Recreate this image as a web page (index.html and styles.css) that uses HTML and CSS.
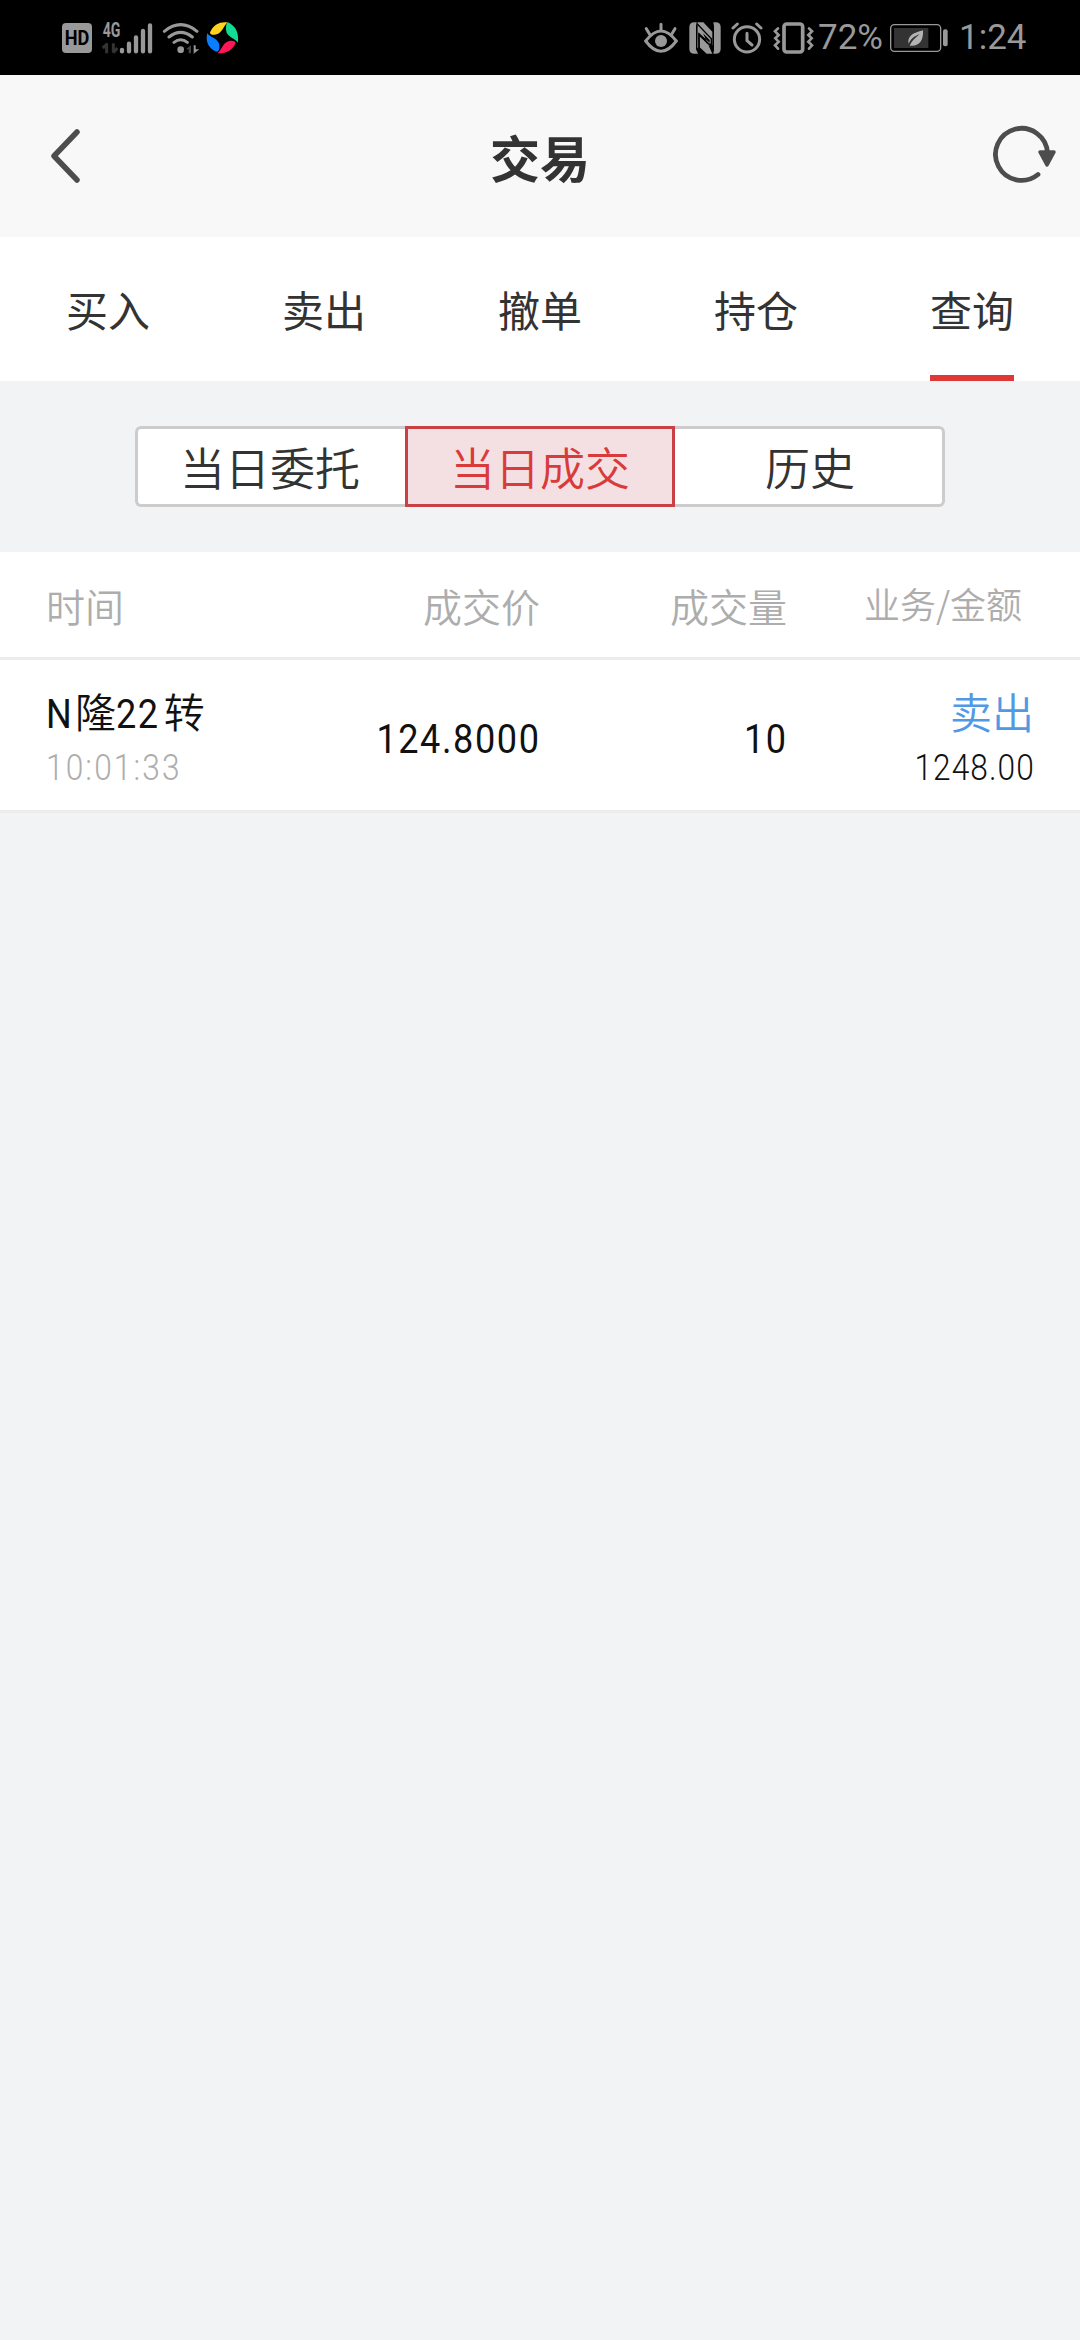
FILE: index.html
```
<!DOCTYPE html>
<html lang="zh-CN">
<head>
	<meta charset="UTF-8">
	<title>交易</title>
	<link rel="stylesheet" href="styles.css">
</head>
<body>
<div class="status">
	<div class="status-left">
		<svg class="icon-hd" viewBox="0 0 90 90">
			<rect width="90" height="90" rx="12" fill="#999"/>
			<text x="45" y="66" text-anchor="middle" textLength="74" lengthAdjust="spacingAndGlyphs" class="hd-text">HD</text>
		</svg>
		<svg class="icon-signal" viewBox="0 0 153 96">
			<text x="2" y="44" textLength="53" lengthAdjust="spacingAndGlyphs" class="g-text">4G</text>
			<path d="M14 64v30M2 78l14-12M34 64v28M46 78L34 92" stroke="#333" stroke-width="9"/>
			<g stroke="#999" stroke-width="13" stroke-linecap="round">
				<path d="M60 84v4M81 65v23M102 46v42M123 27v61M144 10v78"/>
			</g>
		</svg>
		<svg class="icon-wifi" viewBox="0 0 114 96">
			<g fill="none" stroke="#999" stroke-width="9" stroke-linecap="round">
				<path d="M7 28Q56-12 105 28M21 45Q56 17 91 45M36 61Q56 46 76 61"/>
			</g>
			<circle cx="56" cy="83" r="10" fill="#999"/>
			<path d="M72 82l15-12v24h-7v-12z" fill="#444"/>
			<path d="M95 70h6v12h11l-17 13z" fill="#999"/>
		</svg>
		<svg class="icon-ball" viewBox="0 0 100 100">
			<path d="M12 35C22 10 42 1 66 4C54 12 50 38 30 41C20 43 13 42 12 35z" fill="#ffd21c"/>
			<path d="M66 4C90 14 101 38 96 66C91 54 62 48 61 29C60 16 61 9 66 4z" fill="#12db94"/>
			<path d="M90 66C82 88 60 101 34 97C46 92 50 66 68 61C79 58 87 60 90 66z" fill="#ff1659"/>
			<path d="M34 93C9 86-3 62 4 36C9 48 36 52 40 70C42 83 40 89 34 93z" fill="#0b7dff"/>
		</svg>
	</div>
	<div class="status-right">
		<svg class="icon-eye" viewBox="0 0 102 96">
			<path d="M5 57Q28 27 51 27T97 57Q74 88 51 88T5 57z" fill="none" stroke="#999" stroke-width="9"/>
			<circle cx="51" cy="57" r="18" fill="#999"/>
			<path d="M51 7v18M7 20l10 17M93 20L83 37" stroke="#999" stroke-width="9" stroke-linecap="round"/>
		</svg>
		<svg class="icon-nfc" viewBox="0 0 96 96">
			<path d="M16 1H23L21 12V82L27 95H16Q1 95 1 80V16Q1 1 16 1zM80 1H73L75 12V84L73 95H80Q95 95 95 80V16Q95 1 80 1z" fill="#999"/>
			<path d="M26 1h17l27 28v41L28 31v51l-3-6zM70 95H53L32 76V42l30 31V54L42 34" fill="#999"/>
			<path d="M25 6l42 44v23L30 38v44" fill="none" stroke="#000" stroke-width="4"/>
		</svg>
		<svg class="icon-alarm" viewBox="0 0 96 96">
			<g fill="none" stroke="#999" stroke-width="9" stroke-linecap="round">
				<circle cx="48" cy="52" r="38"/>
				<path d="M6 18L19 6M77 6l13 12"/>
				<path d="M48 34v22l15 13"/>
			</g>
		</svg>
		<svg class="icon-vibrate" viewBox="0 0 123 96">
			<g fill="none" stroke="#999" stroke-width="9" stroke-linecap="round">
				<rect x="33" y="6" width="56" height="84" rx="8" stroke-width="11"/>
				<path d="M15 19L6 28l11 11L7 49l10 10L6 70l9 10" stroke-width="8"/>
				<path d="M108 19l9 9-11 11 10 10-10 10 11 11-9 10" stroke-width="8"/>
			</g>
		</svg>
		<span class="percent">72%</span>
		<svg class="icon-battery" viewBox="0 0 174 84">
			<rect x="2" y="2" width="150" height="80" rx="11" fill="none" stroke="#999" stroke-width="4"/>
			<rect x="12" y="12" width="103" height="60" fill="#333"/>
			<rect x="159" y="16" width="14" height="51" rx="6" fill="#999"/>
			<path d="M99 19C78 25 51 32 56 59C66 39 76 36 89 31C76 42 67 49 59 65C88 69 101 49 99 19z" fill="#b3b3b3"/>
		</svg>
		<span class="clock">1:24</span>
	</div>
</div>

<div class="header">
	<svg class="back" viewBox="0 0 30 54">
		<path d="M27 3L4 27l23 24" fill="none" stroke="#4d4d4d" stroke-width="5.5" stroke-linecap="round" stroke-linejoin="round"/>
	</svg>
	<h1 class="title">交易</h1>
	<svg class="refresh" viewBox="0 0 64 58">
		<path d="M45 49.5A26 26 0 1 1 54.5 28" fill="none" stroke="#4d4d4d" stroke-width="4.8" stroke-linecap="round"/>
		<path d="M47 27h14L54 40z" fill="#4d4d4d" stroke="#4d4d4d" stroke-width="3.5" stroke-linejoin="round"/>
	</svg>
</div>

<div class="tabs">
	<div class="tab"><span>买入</span></div>
	<div class="tab"><span>卖出</span></div>
	<div class="tab"><span>撤单</span></div>
	<div class="tab"><span>持仓</span></div>
	<div class="tab active"><span>查询</span></div>
</div>

<div class="segment-wrap">
	<div class="segment">
		<div class="seg">当日委托</div>
		<div class="seg active">当日成交</div>
		<div class="seg">历史</div>
	</div>
</div>

<div class="row thead">
	<div class="col-time">时间</div>
	<div class="col-price">成交价</div>
	<div class="col-count">成交量</div>
	<div class="col-amount">业务/金额</div>
</div>
<div class="row record">
	<div class="col-time">
		<div class="name"><span class="din">N</span>隆<span class="din">22</span>转</div>
		<div class="time"><span class="din">10:01:33</span></div>
	</div>
	<div class="col-price"><span class="din">124.8000</span></div>
	<div class="col-count"><span class="din">10</span></div>
	<div class="col-amount">
		<div class="sell">卖出</div>
		<div class="money"><span class="din">1248.00</span></div>
	</div>
</div>
</body>
</html>
```
FILE: styles.css
```
* {
  box-sizing: border-box;
}
body {
  margin: 0;
  min-height: 2340px;
  background-color: #f2f3f5;
  color: #333;
  font-family: "Noto Sans CJK SC", sans-serif;
}
svg {
  display: block;
  flex: none;
}

/* status bar */
.status {
  display: flex;
  justify-content: space-between;
  height: 75px;
  padding: 0 57px 0 62px;
  background-color: #000;
  color: #999;
  font-family: Roboto, sans-serif;
}
.status-left,
.status-right {
  display: flex;
  align-items: center;
}
.icon-hd {width: 30px;height: 30px;margin-right: 10px}
.icon-signal {width: 51px;height: 32px;margin-right: 9px;overflow: visible}
.icon-wifi {width: 38px;height: 32px;margin-right: 6px}
.icon-ball {width: 33px;height: 33px}
.icon-eye {width: 34px;height: 32px;margin-right: 11px}
.icon-nfc {width: 32px;height: 32px;margin-right: 10px}
.icon-alarm {width: 32px;height: 32px;margin-right: 10px}
.icon-vibrate {width: 41px;height: 32px;margin-right: 4px}
.icon-battery {width: 58px;height: 28px}
.hd-text {
  font: bold 60px Roboto, sans-serif;
  fill: #000;
}
.g-text {
  font: bold 58px Roboto, sans-serif;
  fill: #999;
}
.percent,
.clock {
  font-size: 35px;
  line-height: 75px;
}
.percent {
  width: 72px;
}
.clock {
  width: 64px;
  margin-left: 11px;
}

/* title bar */
.header {
  display: flex;
  align-items: center;
  justify-content: space-between;
  height: 162px;
  padding: 0 23px 0 50px;
  background-color: #f8f8f8;
}
.back {
  width: 30px;
  height: 54px;
  margin-right: 7px;
}
.title {
  margin: 0;
  font-size: 50px;
  line-height: 74px;
  font-weight: bold;
}
.refresh {
  width: 64px;
  height: 58px;
  margin-bottom: 4px;
}

.tabs {
  display: flex;
  height: 144px;
  background-color: #fff;
}
.tab {
  flex: 1;
  display: flex;
  justify-content: center;
  font-size: 42px;
  line-height: 143px;
}
.tab.active span {
  height: 144px;
  border-bottom: 6px solid #e03836;
}

/* segmented control */
.segment-wrap {
  height: 171px;
  padding: 45px 135px 0;
}
.segment {
  display: flex;
  height: 81px;
}
.seg {
  flex: 1;
  border: 3px solid #ccc;
  background-color: #fff;
  font-size: 45px;
  font-weight: 350;
  line-height: 75px;
  text-align: center;
}
.seg:first-child {
  padding-right: 3px;
  border-right: 0;
  border-radius: 6px 0 0 6px;
}
.seg:last-child {
  padding-left: 3px;
  border-left: 0;
  border-radius: 0 6px 6px 0;
}
.seg.active {
  border-color: #c94144;
  background-color: #f4e0e2;
  color: #d93b3b;
}

/* table */
.row {
  display: grid;
  grid-template-columns: 240px 254px 247px 1fr;
  align-items: center;
  padding: 0 46px;
  border-bottom: 3px solid #ececec;
  background-color: #fff;
}
.col-price,
.col-count,
.col-amount {
  text-align: right;
}
.thead {
  height: 108px;
  color: #adadad;
  font-size: 39px;
  font-weight: 350;
}
.thead .col-amount {
  padding: 0 12px 4px 0;
  font-size: 36px;
}
.record {
  height: 153px;
  color: #111;
  font-size: 41px;
}
.name,
.sell {
  height: 62px;
  font-weight: 350;
  line-height: 59px;
}
.sell {
  color: #5199e5;
  font-size: 42px;
}
.time,
.money {
  height: 46px;
  font-size: 36px;
  line-height: 43px;
}
.time {
  color: #adadad;
}
.din {
  display: inline-block;
  margin-right: -1px;
  font-family: Roboto, sans-serif;
  font-weight: 400;
  letter-spacing: 1.8px;
  transform: scaleX(.88);
  transform-origin: right;
}
.col-time .din {
  transform-origin: left;
}
.name .din {
  margin-right: -2px;
}
.time .din {
  font-weight: 350;
  letter-spacing: 2.4px;
}
.money .din {
  font-weight: 350;
  letter-spacing: 1.2px;
}
```
